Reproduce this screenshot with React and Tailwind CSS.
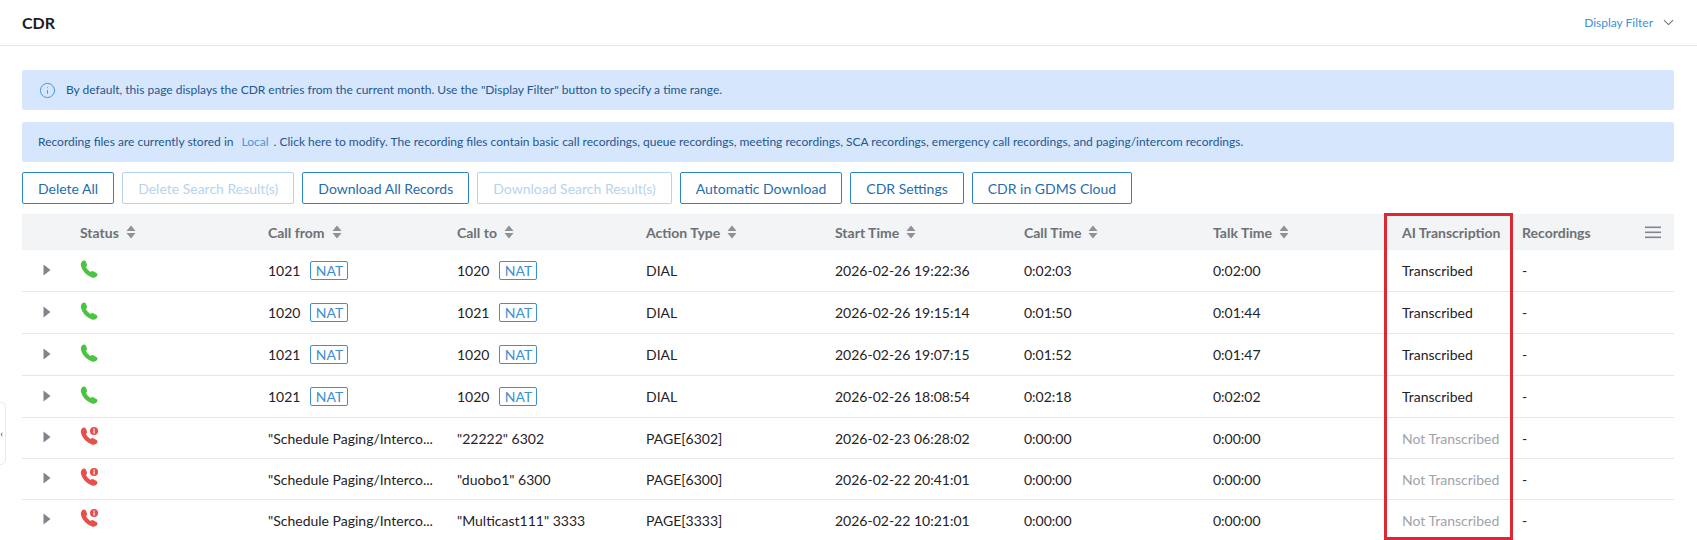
import React from 'react';
import { ChevronDown, Info } from 'lucide-react';

const COLS = 'grid grid-cols-[47px_188px_189px_189px_189px_189px_189px_190px_119px_1fr]';

const ROWS = [
  { ok: true, from: '1021', to: '1020', nat: true, action: 'DIAL', start: '2026-02-26 19:22:36', call: '0:02:03', talk: '0:02:00', ai: 'Transcribed' },
  { ok: true, from: '1020', to: '1021', nat: true, action: 'DIAL', start: '2026-02-26 19:15:14', call: '0:01:50', talk: '0:01:44', ai: 'Transcribed' },
  { ok: true, from: '1021', to: '1020', nat: true, action: 'DIAL', start: '2026-02-26 19:07:15', call: '0:01:52', talk: '0:01:47', ai: 'Transcribed' },
  { ok: true, from: '1021', to: '1020', nat: true, action: 'DIAL', start: '2026-02-26 18:08:54', call: '0:02:18', talk: '0:02:02', ai: 'Transcribed' },
  { ok: false, from: '"Schedule Paging/Interco...', to: '"22222" 6302', action: 'PAGE[6302]', start: '2026-02-23 06:28:02', call: '0:00:00', talk: '0:00:00', ai: 'Not Transcribed' },
  { ok: false, from: '"Schedule Paging/Interco...', to: '"duobo1" 6300', action: 'PAGE[6300]', start: '2026-02-22 20:41:01', call: '0:00:00', talk: '0:00:00', ai: 'Not Transcribed' },
  { ok: false, from: '"Schedule Paging/Interco...', to: '"Multicast111" 3333', action: 'PAGE[3333]', start: '2026-02-22 10:21:01', call: '0:00:00', talk: '0:00:00', ai: 'Not Transcribed' },
];

const BUTTONS = [
  { label: 'Delete All' },
  { label: 'Delete Search Result(s)', off: true },
  { label: 'Download All Records' },
  { label: 'Download Search Result(s)', off: true },
  { label: 'Automatic Download' },
  { label: 'CDR Settings' },
  { label: 'CDR in GDMS Cloud' },
];

const SortCaret = () => (
  <svg width="10" height="14" viewBox="0 0 10 14" className="ml-[7px] shrink-0" fill="#8e9296">
    <path d="M5 0.5 L9.5 6 L0.5 6 Z" />
    <path d="M5 13.5 L9.5 8 L0.5 8 Z" />
  </svg>
);

const PhoneIcon = ({ color, missed }) => (
  <svg width="18" height="18" viewBox="0 0 18 18">
    <path
      fill={color}
      d="M2 1.5 C3 0.3 5 0.2 5.8 1.5 L7 4.5 C7.3 5.5 6.8 6.2 6 6.8 C6.6 8.8 8.6 11 10.8 12 C11.4 11.2 12.2 10.8 13.2 11.2 L16.5 13 C17.6 13.8 17.8 15 17 16 C15.8 17.6 14 18 12 17.4 C6.5 15.6 2.4 11 1 6 C0.6 4.3 1 2.8 2 1.5 Z"
    />
    {missed && (
      <>
        <circle cx="14" cy="4" r="5" fill="#fff" />
        <circle cx="14" cy="4" r="4" fill={color} />
        <rect x="13.4" y="1.6" width="1.3" height="1.2" fill="#fff" />
        <rect x="13.4" y="3.4" width="1.3" height="3" fill="#fff" />
      </>
    )}
  </svg>
);

const NatBadge = () => (
  <span className="ml-2.5 inline-flex h-[19px] w-[38px] items-center justify-center rounded-[2px] border border-[#3d8fd6] text-[14px] text-[#3d8fd6]">
    NAT
  </span>
);

const Header = ({ children }) => (
  <div className="flex items-center px-[11px] font-bold text-[#6d7075]">
    {children}
    <SortCaret />
  </div>
);

const Cell = ({ children, className = '' }) => (
  <div className={`flex items-center whitespace-nowrap px-[11px] ${className}`}>{children}</div>
);

export default function App() {
  return (
    <div className="relative h-[540px] w-[1697px] overflow-hidden bg-white font-['Lato',sans-serif] text-[14px] text-[#1f2226]">
      {/* Title bar */}
      <header className="flex h-[46px] items-center justify-between border-b border-[#e6e8ea] pl-[22px] pr-[20px]">
        <h1 className="text-[16px] font-bold text-[#1c1c1e]">CDR</h1>
        <div className="flex items-center gap-[7px] text-[12px] text-[#3f8fdc]">
          Display Filter
          <ChevronDown size={17} className="text-[#70767e]" strokeWidth={1.5} />
        </div>
      </header>

      <div className="pl-[22px] pr-[23px]">
        {/* Notices */}
        <div className="mt-6 flex h-10 items-center rounded-[2px] bg-[#d6e7fd] pl-[17px] text-[12px] text-[#24568f]">
          <Info size={17} className="mr-[10px] text-[#3b8fdd]" strokeWidth={1.3} />
          By default, this page displays the CDR entries from the current month. Use the "Display Filter" button to specify a time range.
        </div>
        <div className="mt-3 flex h-10 items-center rounded-[2px] bg-[#d6e7fd] pl-[16px] text-[12px] text-[#24568f]">
          Recording files are currently stored in
          <span className="ml-2 mr-[5px] text-[#4a96dc]"> Local </span>
          . Click here to modify. The recording files contain basic call recordings, queue recordings, meeting recordings, SCA recordings, emergency call recordings, and paging/intercom recordings.
        </div>

        {/* Actions */}
        <div className="mt-[10px] flex gap-2">
          {BUTTONS.map((b) => (
            <button
              key={b.label}
              className={[
                'h-[32px] rounded-[2px] border px-[15px] text-[14px]',
                b.off ? 'border-[#b6d5ec] text-[#b7d4ee]' : 'border-[#2a86c4] text-[#1f6cae]',
              ].join(' ')}
            >
              {b.label}
            </button>
          ))}
        </div>

        {/* Table */}
        <div className="mt-[10px]">
          <div className={`${COLS} h-[36px] bg-[#f2f4f5]`}>
            <div />
            <Header>Status</Header>
            <Header>Call from</Header>
            <Header>Call to</Header>
            <Header>Action Type</Header>
            <Header>Start Time</Header>
            <Header>Call Time</Header>
            <Header>Talk Time</Header>
            <div className="flex items-center pl-[10px] font-bold text-[#6d7075]">AI Transcription</div>
            <div className="flex items-center justify-between pl-[11px] pr-[13px] font-bold text-[#6d7075]">
              Recordings
              <svg width="16" height="13" viewBox="0 0 16 13" fill="#80848c">
                <rect y="0.5" width="16" height="1.6" />
                <rect y="5.5" width="16" height="1.6" />
                <rect y="10.5" width="16" height="1.6" />
              </svg>
            </div>
          </div>
          {ROWS.map((r, i) => (
            <div key={i} className={`${COLS} ${r.nat ? 'h-[42px]' : 'h-[41px]'} border-b border-[#e3e8ec]`}>
              <div className="flex -translate-y-[1px] items-center pl-[21px]">
                <svg width="8" height="12" viewBox="0 0 8 12" fill="#80858b">
                  <path d="M0.5 0.5 L7.5 6 L0.5 11.5 Z" />
                </svg>
              </div>
              <Cell className="-translate-y-[2px]">
                <PhoneIcon color={r.ok ? '#4ac441' : '#e64f4a'} missed={!r.ok} />
              </Cell>
              <Cell>
                {r.from}
                {r.nat && <NatBadge />}
              </Cell>
              <Cell>
                {r.to}
                {r.nat && <NatBadge />}
              </Cell>
              <Cell>{r.action}</Cell>
              <Cell>{r.start}</Cell>
              <Cell>{r.call}</Cell>
              <Cell>{r.talk}</Cell>
              <div className={`flex items-center pl-[10px] ${r.ok ? '' : 'text-[#a0a4a9]'}`}>{r.ai}</div>
              <Cell>-</Cell>
            </div>
          ))}
        </div>
      </div>

      {/* Highlight drawn over the AI Transcription column */}
      <div className="absolute left-[1384px] top-[213px] h-[327px] w-[129px] border-[3px] border-[#dc2832]" />

      {/* Collapsed side handle */}
      <div className="absolute left-[-5px] top-[402px] flex h-[63px] w-[11px] items-center justify-end rounded-[5px] border border-[#e8eaec] bg-white pr-[2px] text-[10px] text-[#444]">
        ‹
      </div>
    </div>
  );
}
